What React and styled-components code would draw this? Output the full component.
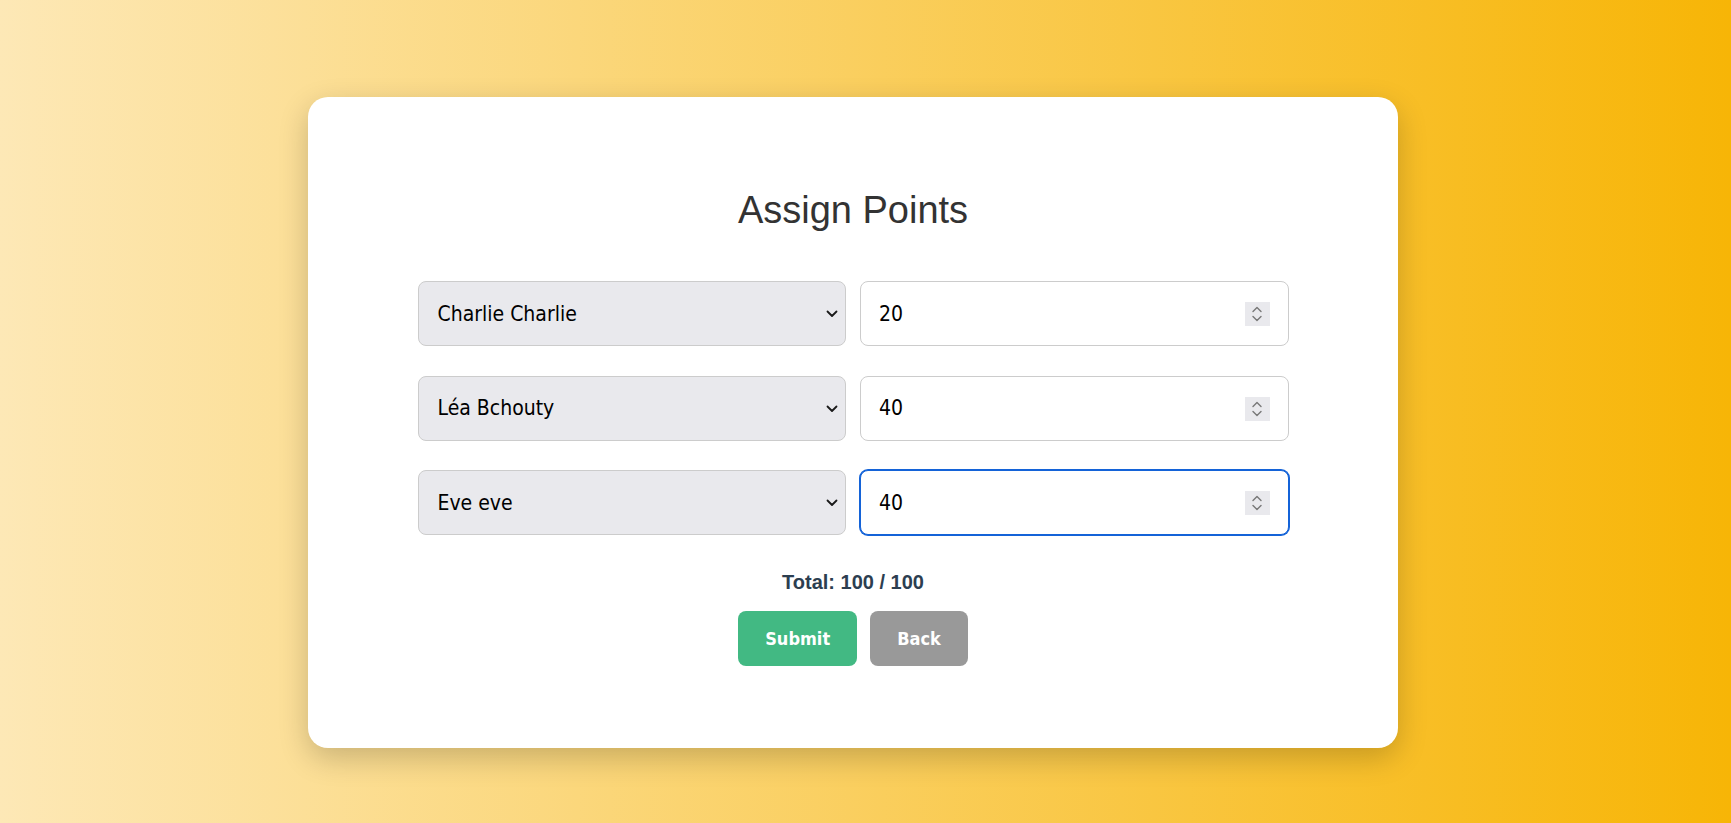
import React, { useState } from "react";
import styled, { createGlobalStyle } from "styled-components";

const GlobalStyle = createGlobalStyle`
  html, body { margin: 0; padding: 0; }
  body {
    min-height: 100vh;
    background: linear-gradient(to right, #fde8b6 0%, #f7b506 100%);
    font-family: "Liberation Sans", Arial, sans-serif;
  }
`;

const Page = styled.div`
  min-height: 100vh;
  display: flex;
  justify-content: center;
  align-items: flex-start;
  padding: 97px 25px 0 0;
  box-sizing: border-box;
`;

const Card = styled.div`
  width: 1090px;
  box-sizing: border-box;
  background: #ffffff;
  border-radius: 20px;
  box-shadow: 0 10px 30px rgba(0, 0, 0, 0.2);
  padding: 91px 109px 82px;
  display: flex;
  flex-direction: column;
  align-items: center;
`;

const Title = styled.h2`
  margin: 0 0 49px;
  font-family: "Liberation Sans", Arial, sans-serif;
  font-weight: 400;
  font-size: 38px;
  line-height: 44px;
  color: #333333;
  text-align: center;
`;

const Form = styled.div`
  width: 871px;
  display: flex;
  flex-direction: column;
  gap: 29.5px;
`;

const Row = styled.div`
  display: grid;
  grid-template-columns: 1fr 1fr;
  column-gap: 14px;
  height: 65px;
`;

const FieldWrap = styled.div`
  position: relative;
  height: 100%;
`;

const controlFont = `
  font-family: "DejaVu Sans Condensed", "DejaVu Sans", Verdana, sans-serif;
  font-stretch: condensed;
  font-size: 21px;
  color: #000000;
`;

const Select = styled.select`
  ${controlFont}
  appearance: none;
  -webkit-appearance: none;
  width: 100%;
  height: 100%;
  box-sizing: border-box;
  background: #e9e9ed;
  border: 1px solid #cccccc;
  border-radius: 8px;
  padding: 0 44px 0 19px;
  outline: none;
`;

const Chevron = styled.svg`
  position: absolute;
  right: 8px;
  top: 29px;
  width: 12px;
  height: 8px;
  pointer-events: none;
`;

const NumberInput = styled.input`
  ${controlFont}
  width: 100%;
  height: 100%;
  box-sizing: border-box;
  background: #ffffff;
  border: 1px solid #cccccc;
  border-radius: 8px;
  padding: 0 50px 0 18px;
  outline: none;
  caret-color: #000;
  -moz-appearance: textfield;

  &::-webkit-inner-spin-button,
  &::-webkit-outer-spin-button {
    -webkit-appearance: none;
    margin: 0;
  }

  &:focus {
    border-color: #1463d8;
    box-shadow: 0 0 0 1px #1463d8;
  }
`;

const Spinner = styled.div`
  position: absolute;
  right: 19px;
  top: 21px;
  width: 25px;
  height: 24px;
  background: #e9e9ed;
  display: flex;
  align-items: center;
  justify-content: center;
  pointer-events: none;
`;

const Total = styled.div`
  margin-top: 36px;
  font-family: "Liberation Sans", Arial, sans-serif;
  font-weight: 700;
  font-size: 20px;
  line-height: 23px;
  color: #2c3e50;
  text-align: center;
`;

const Buttons = styled.div`
  margin-top: 17px;
  display: flex;
  justify-content: center;
  gap: 13px;
`;

const Button = styled.button`
  height: 55px;
  padding: 0 27px;
  border: none;
  border-radius: 8px;
  background: ${(p) => (p.$variant === "back" ? "#999999" : "#42b983")};
  color: #ffffff;
  font-family: "DejaVu Sans Condensed", "DejaVu Sans", Verdana, sans-serif;
  font-stretch: condensed;
  font-weight: 700;
  font-size: 18px;
  cursor: pointer;
`;

const players = [
  { id: 1, name: "Charlie Charlie" },
  { id: 2, name: "Léa Bchouty" },
  { id: 3, name: "Eve eve" },
];

export default function App() {
  const [rows, setRows] = useState([
    { player: 1, points: 20 },
    { player: 2, points: 40 },
    { player: 3, points: 40 },
  ]);

  const total = rows.reduce((s, r) => s + (Number(r.points) || 0), 0);

  const update = (i, key, value) =>
    setRows((prev) => prev.map((r, j) => (j === i ? { ...r, [key]: value } : r)));

  return (
    <>
      <GlobalStyle />
      <Page>
        <Card>
          <Title>Assign Points</Title>
          <Form>
            {rows.map((r, i) => (
              <Row key={i}>
                <FieldWrap>
                  <Select
                    value={r.player}
                    onChange={(e) => update(i, "player", Number(e.target.value))}
                  >
                    {players.map((p) => (
                      <option key={p.id} value={p.id}>
                        {p.name}
                      </option>
                    ))}
                  </Select>
                  <Chevron viewBox="0 0 12 8">
                    <path d="M1.5 1.5 L6 6 L10.5 1.5" fill="none" stroke="#1a1a1a" strokeWidth="1.8" strokeLinecap="round" strokeLinejoin="round" />
                  </Chevron>
                </FieldWrap>
                <FieldWrap>
                  <NumberInput
                    type="number"
                    value={r.points}
                    autoFocus={i === rows.length - 1}
                    onChange={(e) => update(i, "points", e.target.value)}
                  />
                  <Spinner>
                    <svg width="12" height="18" viewBox="0 0 12 18">
                      <path d="M2 6.5 L6 2.5 L10 6.5" fill="none" stroke="#777777" strokeWidth="1.4" strokeLinecap="round" strokeLinejoin="round" />
                      <path d="M2 11.5 L6 15.5 L10 11.5" fill="none" stroke="#777777" strokeWidth="1.4" strokeLinecap="round" strokeLinejoin="round" />
                    </svg>
                  </Spinner>
                </FieldWrap>
              </Row>
            ))}
          </Form>
          <Total>
            Total: {total} / 100
          </Total>
          <Buttons>
            <Button type="button">Submit</Button>
            <Button type="button" $variant="back">
              Back
            </Button>
          </Buttons>
        </Card>
      </Page>
    </>
  );
}
